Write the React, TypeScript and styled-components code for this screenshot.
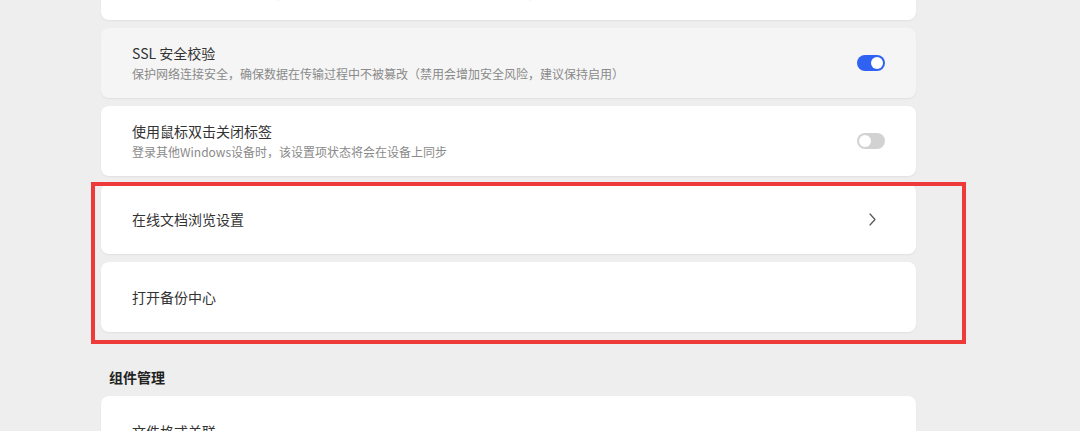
import React from "react";
import styled, { createGlobalStyle } from "styled-components";

const GlobalStyle = createGlobalStyle`
  html, body {
    margin: 0;
    padding: 0;
    background: #eeeeee;
    font-family: "Noto Sans CJK SC", "Noto Sans", sans-serif;
    overflow: hidden;
  }
`;

const Page = styled.div`
  width: 815px;
  margin: -50px 0 0 101px;
  display: flex;
  flex-direction: column;
`;

const List = styled.div`
  display: flex;
  flex-direction: column;
  gap: 8px;
`;

const Card = styled.div<{ hovered?: boolean; lift?: number }>`
  height: 70px;
  box-sizing: border-box;
  padding: 0 31px ${(p) => p.lift ?? 0}px;
  display: flex;
  align-items: center;
  justify-content: space-between;
  background: ${(p) => (p.hovered ? "#f5f5f5" : "#ffffff")};
  border-radius: 8px;
  box-shadow: 0 1px 2px rgba(0, 0, 0, 0.06);
`;

const TextBlock = styled.div`
  display: flex;
  flex-direction: column;
  gap: 2px;
`;

const Title = styled.div`
  font-size: 14px;
  line-height: 20px;
  color: #333333;
`;

const Subtitle = styled.div`
  font-size: 12px;
  line-height: 18px;
  color: #8a8a8a;
`;

const Track = styled.div<{ on: boolean }>`
  width: 28px;
  height: 16px;
  border-radius: 8px;
  background: ${(p) => (p.on ? "#2f62f2" : "#d2d2d2")};
  display: flex;
  align-items: center;
  justify-content: ${(p) => (p.on ? "flex-end" : "flex-start")};
  padding: 0 2px;
  box-sizing: border-box;
`;

const Knob = styled.div`
  width: 12px;
  height: 12px;
  border-radius: 50%;
  background: #ffffff;
`;

const Chevron = styled.svg`
  margin-right: 9px;
`;

const Group = styled.div`
  position: relative;
  display: flex;
  flex-direction: column;
  gap: 8px;
`;

const Highlight = styled.div`
  position: absolute;
  top: -2px;
  left: -10px;
  right: -50px;
  bottom: -12px;
  border: 4px solid #ef3a3a;
  pointer-events: none;
`;

const SectionTitle = styled.div`
  margin: 35px 0 9px 8px;
  font-size: 14px;
  line-height: 20px;
  font-weight: 700;
  color: #222222;
`;

const Toggle = ({ on }: { on: boolean }) => (
  <Track on={on}>
    <Knob />
  </Track>
);

const App = () => {
  return (
    <>
      <GlobalStyle />
      <Page>
        <List>
          <Card lift={4}>
            <TextBlock>
              <Title>自动更新</Title>
              <Subtitle>
                开启后自动检查并下载更新，更新过程中无需手动确认（可能占用少量网络，建议保持开启）
              </Subtitle>
            </TextBlock>
          </Card>
          <Card hovered>
            <TextBlock>
              <Title>SSL 安全校验</Title>
              <Subtitle>
                保护网络连接安全，确保数据在传输过程中不被篡改（禁用会增加安全风险，建议保持启用）
              </Subtitle>
            </TextBlock>
            <Toggle on={true} />
          </Card>
          <Card>
            <TextBlock>
              <Title>使用鼠标双击关闭标签</Title>
              <Subtitle>登录其他Windows设备时，该设置项状态将会在设备上同步</Subtitle>
            </TextBlock>
            <Toggle on={false} />
          </Card>
          <Group>
            <Card>
              <Title>在线文档浏览设置</Title>
              <Chevron width="7" height="13" viewBox="0 0 7 13">
                <path
                  d="M1 1 L6 6.5 L1 12"
                  fill="none"
                  stroke="#555555"
                  strokeWidth="1.2"
                  strokeLinecap="round"
                  strokeLinejoin="round"
                />
              </Chevron>
            </Card>
            <Card>
              <Title>打开备份中心</Title>
            </Card>
            <Highlight />
          </Group>
        </List>
        <SectionTitle>组件管理</SectionTitle>
        <List>
          <Card>
            <Title>文件格式关联</Title>
          </Card>
        </List>
      </Page>
    </>
  );
};

export default App;
